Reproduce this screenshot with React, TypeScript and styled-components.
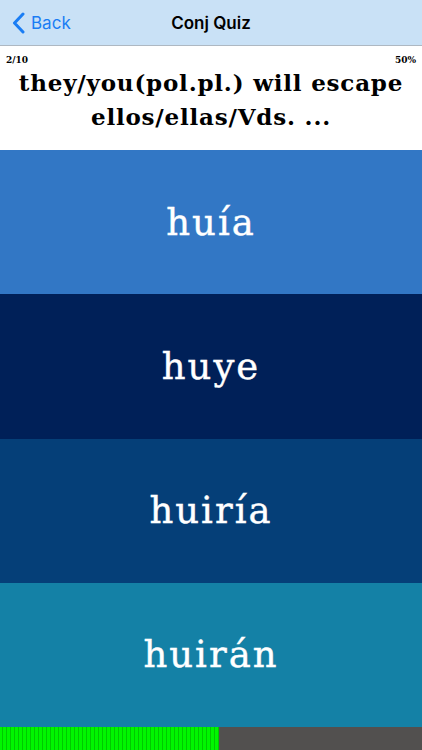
import React from "react";
import styled, { createGlobalStyle } from "styled-components";

const Global = createGlobalStyle`
  html, body { margin: 0; padding: 0; background: #fff; }
  #root { width: 422px; height: 750px; }
`;

const Page = styled.div`
  width: 422px;
  height: 750px;
  display: flex;
  flex-direction: column;
  overflow: hidden;
`;

const NavBar = styled.div`
  height: 45px;
  flex: 0 0 45px;
  background: #c9e1f6;
  border-bottom: 1px solid #aeb8c2;
  display: grid;
  grid-template-columns: 1fr auto 1fr;
  align-items: center;
  font-family: Inter, "Liberation Sans", sans-serif;
`;

const BackButton = styled.div`
  display: flex;
  align-items: center;
  gap: 6px;
  padding-left: 12px;
  color: #1a7df4;
  font-size: 17px;
`;

const NavTitle = styled.div`
  font-size: 17px;
  font-weight: 600;
  color: #000;
`;

const Header = styled.div`
  flex: 0 0 104px;
  background: #fff;
  display: flex;
  flex-direction: column;
  padding: 8px 6px 0 6px;
  box-sizing: border-box;
`;

const CountRow = styled.div`
  display: flex;
  justify-content: space-between;
  font-family: "DejaVu Serif", serif;
  font-weight: 700;
  font-size: 9px;
  line-height: 12px;
  color: #000;
`;

const Prompt = styled.div`
  font-family: "DejaVu Serif", serif;
  font-weight: 700;
  font-size: 23px;
  line-height: 34px;
  letter-spacing: 0.8px;
  text-align: center;
  color: #000;
  white-space: nowrap;
`;

const Choices = styled.div`
  flex: 1;
  display: flex;
  flex-direction: column;
`;

const Choice = styled.div<{ $bg: string }>`
  flex: 1;
  background: ${(p) => p.$bg};
  display: flex;
  align-items: center;
  justify-content: center;
  color: #fff;
  font-family: "DejaVu Serif", serif;
  font-size: 37px;
  letter-spacing: 2px;
  -webkit-text-stroke: 0.4px #fff;
`;

const Progress = styled.div`
  flex: 0 0 23px;
  display: flex;
  background: #52504f;
`;

const ProgressFill = styled.div`
  height: 100%;
  background: repeating-linear-gradient(
    90deg,
    #00f500 0px,
    #00f500 2px,
    #00c800 2px,
    #00c800 3px,
    #00f500 3px,
    #00f500 4px
  );
`;

const choices = [
  { text: "huía", bg: "#3277c5" },
  { text: "huye", bg: "#002058" },
  { text: "huiría", bg: "#053f78" },
  { text: "huirán", bg: "#1481a6" },
];

export default function App() {
  return (
    <>
      <Global />
      <Page>
        <NavBar>
          <BackButton>
            <svg width="13" height="22" viewBox="0 0 13 22" fill="none">
              <path d="M11 2 L2.5 11 L11 20" stroke="#1a7df4" strokeWidth="3" strokeLinecap="round" strokeLinejoin="round" />
            </svg>
            <span>Back</span>
          </BackButton>
          <NavTitle>Conj Quiz</NavTitle>
          <div />
        </NavBar>
        <Header>
          <CountRow>
            <span>2/10</span>
            <span>50%</span>
          </CountRow>
          <Prompt>
            they/you(pol.pl.) will escape
            <br />
            ellos/ellas/Vds. ...
          </Prompt>
        </Header>
        <Choices>
          {choices.map((c) => (
            <Choice key={c.text} $bg={c.bg}>
              {c.text}
            </Choice>
          ))}
        </Choices>
        <Progress>
          <ProgressFill style={{ width: `${(219 / 422) * 100}%` }} />
        </Progress>
      </Page>
    </>
  );
}
